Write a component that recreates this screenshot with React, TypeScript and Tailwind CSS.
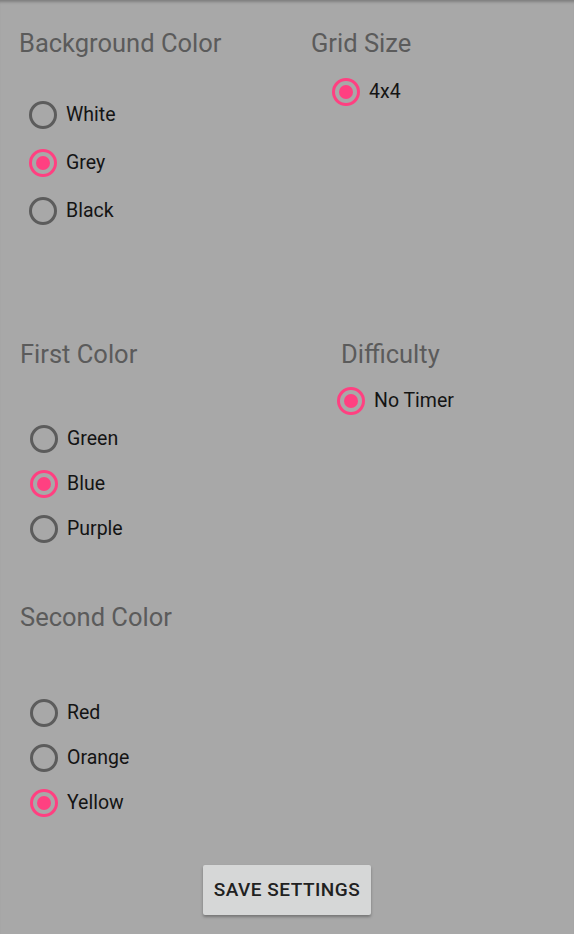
type Opt = { label: string; checked?: boolean }

const Radio = ({ label, checked, rowClass }: Opt & { rowClass: string }) => (
    <div className={`flex items-center gap-[9px] ${rowClass}`}>
        <div className={`w-[28px] h-[28px] rounded-full border-[3px] flex justify-center items-center shrink-0 ${checked ? "border-[#ff4081]" : "border-[#5c5c5c]"}`}>
            {checked && <div className="w-[14px] h-[14px] rounded-full bg-[#ff4081]" />}
        </div>
        <span className="text-[19.5px] leading-6 text-[#141414]">{label}</span>
    </div>
)

const Title = ({ children }: { children: string }) => (
    <h2 className="text-[25.5px] leading-[30px] text-[#5b5b5b]">{children}</h2>
)

const App = () => {
    return (
        <div
            className="w-full min-h-screen bg-[#a8a8a8] flex flex-col pt-[28px] shadow-[inset_0_4px_3px_-2px_rgba(0,0,0,0.25)]"
            style={{ fontFamily: "Roboto, 'Noto Sans', sans-serif" }}
        >
            {/* background + grid size */}
            <div className="flex">
                <div className="w-[311px] pl-[19px] flex flex-col">
                    <Title>Background Color</Title>
                    <div className="mt-[33px] pl-[10px] flex flex-col">
                        <Radio label="White" rowClass="h-12" />
                        <Radio label="Grey" checked rowClass="h-12" />
                        <Radio label="Black" rowClass="h-12" />
                    </div>
                </div>
                <div className="flex-1 flex flex-col">
                    <Title>Grid Size</Title>
                    <div className="mt-[10px] pl-[21px] flex flex-col">
                        <Radio label="4x4" checked rowClass="h-12" />
                    </div>
                </div>
            </div>

            {/* first color + difficulty */}
            <div className="flex mt-[104px]">
                <div className="w-[337px] pl-[20px] flex flex-col">
                    <Title>First Color</Title>
                    <div className="mt-[47px] pl-[10px] flex flex-col">
                        <Radio label="Green" rowClass="h-[45px]" />
                        <Radio label="Blue" checked rowClass="h-[45px]" />
                        <Radio label="Purple" rowClass="h-[45px]" />
                    </div>
                </div>
                <div className="flex-1 flex flex-col">
                    <div className="pl-[4px]">
                        <Title>Difficulty</Title>
                    </div>
                    <div className="mt-[9px] flex flex-col">
                        <Radio label="No Timer" checked rowClass="h-[45px]" />
                    </div>
                </div>
            </div>

            {/* second color */}
            <div className="mt-[51px] pl-[20px] flex flex-col">
                <Title>Second Color</Title>
                <div className="mt-[58px] pl-[10px] flex flex-col">
                    <Radio label="Red" rowClass="h-[45px]" />
                    <Radio label="Orange" rowClass="h-[45px]" />
                    <Radio label="Yellow" checked rowClass="h-[45px]" />
                </div>
            </div>

            <div className="mt-[40px] flex justify-center">
                <button className="w-[168px] h-[50px] rounded-[2px] bg-[#d6d7d7] text-[#212121] text-[19px] font-medium tracking-[0.5px] shadow-[0_2px_3px_rgba(0,0,0,0.3)]">
                    SAVE SETTINGS
                </button>
            </div>
        </div>
    )
}

export default App;
